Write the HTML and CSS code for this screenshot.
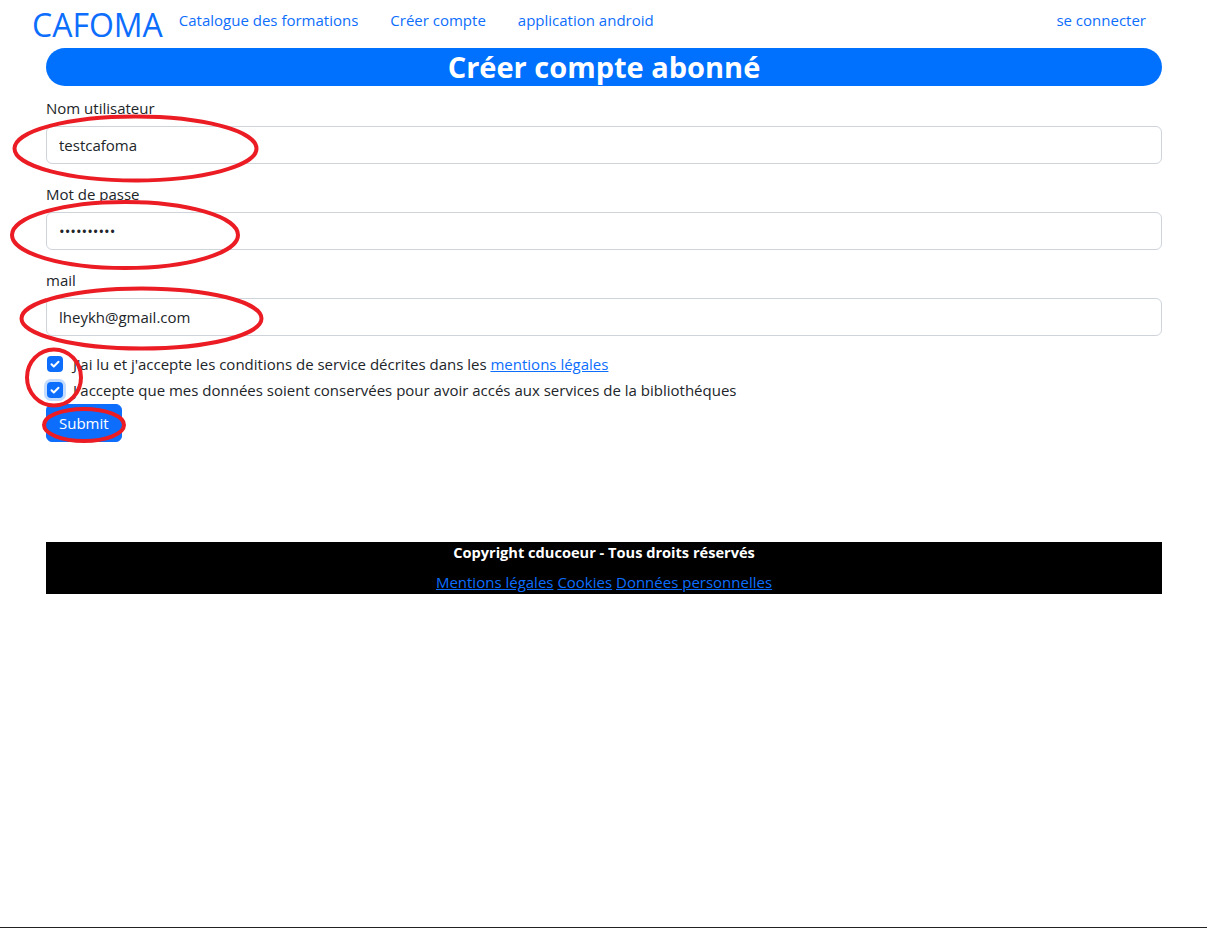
FILE: index.html
```html
<!DOCTYPE html>
<html lang="fr">
<head>
<meta charset="utf-8">
<title>Créer compte abonné - CAFOMA</title>
<link rel="stylesheet" href="styles.css">
</head>
<body>
<div class="page">
  <nav class="navbar">
    <a class="brand" href="#">CAFOMA</a>
    <a class="nav-link" href="#">Catalogue des formations</a>
    <a class="nav-link" href="#">Créer compte</a>
    <a class="nav-link" href="#">application android</a>
    <a class="nav-link login" href="#">se connecter</a>
  </nav>
  <h1 class="banner">Créer compte abonné</h1>
  <form class="form">
    <div class="group">
      <label class="label" for="user">Nom utilisateur</label>
      <input class="input" id="user" type="text" value="testcafoma">
    </div>
    <div class="group">
      <label class="label" for="pass">Mot de passe</label>
      <input class="input" id="pass" type="password" value="testcafoma">
    </div>
    <div class="group">
      <label class="label" for="mail">mail</label>
      <input class="input" id="mail" type="text" value="lheykh@gmail.com">
    </div>
    <div class="check first">
      <span class="box"><svg viewBox="0 0 16 16" width="16" height="16"><path d="M4.5 8.2l2.3 2.3 4.7-4.8" fill="none" stroke="#fff" stroke-width="2" stroke-linecap="round" stroke-linejoin="round"/></svg></span>
      <span>J'ai lu et j'accepte les conditions de service décrites dans les <a href="#" class="link">mentions légales</a></span>
    </div>
    <div class="check">
      <span class="box focus"><svg viewBox="0 0 16 16" width="16" height="16"><path d="M4.5 8.2l2.3 2.3 4.7-4.8" fill="none" stroke="#fff" stroke-width="2" stroke-linecap="round" stroke-linejoin="round"/></svg></span>
      <span>J'accepte que mes données soient conservées pour avoir accés aux services de la bibliothéques</span>
    </div>
    <button class="btn" type="button">Submit</button>
  </form>
  <footer class="footer">
    <p class="copy">Copyright cducoeur - Tous droits réservés</p>
    <p class="links"><a href="#">Mentions légales</a> <a href="#">Cookies</a> <a href="#">Données personnelles</a></p>
  </footer>
</div>
<svg class="marks" width="1210" height="929" viewBox="0 0 1210 929">
  <g fill="none" stroke="#ec1c24" stroke-width="4">
    <ellipse cx="135.5" cy="148.5" rx="121" ry="32"/>
    <ellipse cx="125" cy="235" rx="113" ry="33"/>
    <ellipse cx="141.5" cy="318.5" rx="120" ry="30"/>
    <ellipse cx="54" cy="377.5" rx="27" ry="28"/>
    <ellipse cx="84" cy="425" rx="40" ry="16"/>
  </g>
</svg>
<div class="frame-line"></div>
</body>
</html>
```
FILE: styles.css
```css
* { box-sizing: border-box; }
html, body { margin: 0; padding: 0; background: #fff; }
body {
  font-family: "Open Sans", "Noto Sans", sans-serif;
  font-size: 15px;
  line-height: 24px;
  color: #212529;
}
.page { width: 1116px; margin-left: 46px; }
.navbar {
  display: flex;
  align-items: flex-start;
  margin-left: -14px;
  padding-top: 5px;
}
.brand {
  font-size: 32px;
  line-height: 40px;
  color: #0d6efd;
  text-decoration: none;
}
.nav-link {
  padding: 3px 16px;
  line-height: 24px;
  color: #0d6efd;
  text-decoration: none;
}
.login { margin-left: auto; }
.banner {
  margin: 3px 0 0;
  height: 38px;
  line-height: 38px;
  background: #0070ff;
  border-radius: 19px;
  color: #fff;
  text-align: center;
  font-size: 29px;
  font-weight: 700;
}
.form { margin-top: 10px; }
.group { margin-bottom: 18px; }
.label { display: block; margin-bottom: 6px; }
.input {
  display: block;
  width: 100%;
  height: 38px;
  padding: 6px 12px;
  border: 1px solid #ced4da;
  border-radius: 6px;
  font: inherit;
  color: #212529;
  background: #fff;
}
.check {
  display: flex;
  align-items: center;
  gap: 10px;
  height: 26px;
  margin-left: 1px;
}
.check.first { margin-top: -3px; }
.box {
  width: 16px;
  height: 16px;
  border-radius: 4px;
  background: #0d6efd;
  display: flex;
  flex: none;
}
.box.focus { box-shadow: 0 0 0 3px rgba(13,110,253,.25); }
.link { color: #0d6efd; text-decoration: underline; }
.btn {
  display: block;
  margin-top: 1px;
  height: 38px;
  padding: 6px 12px;
  background: #0d6efd;
  border: 1px solid #0d6efd;
  border-radius: 6px;
  color: #fff;
  font: inherit;
}
.footer {
  margin-top: 100px;
  background: #000;
  color: #fff;
  text-align: center;
  height: 52px;
}
.footer p { margin: 0; }
.copy { font-weight: 700; font-size: 14.6px; line-height: 20px; }
.links { margin-top: 8px !important; line-height: 24px; }
.links a { color: #0d6efd; text-decoration: underline; }
.marks { position: absolute; left: 0; top: 0; pointer-events: none; }
.frame-line {
  position: fixed;
  left: 0;
  right: 3px;
  bottom: 1px;
  height: 1px;
  background: #222;
}
```
